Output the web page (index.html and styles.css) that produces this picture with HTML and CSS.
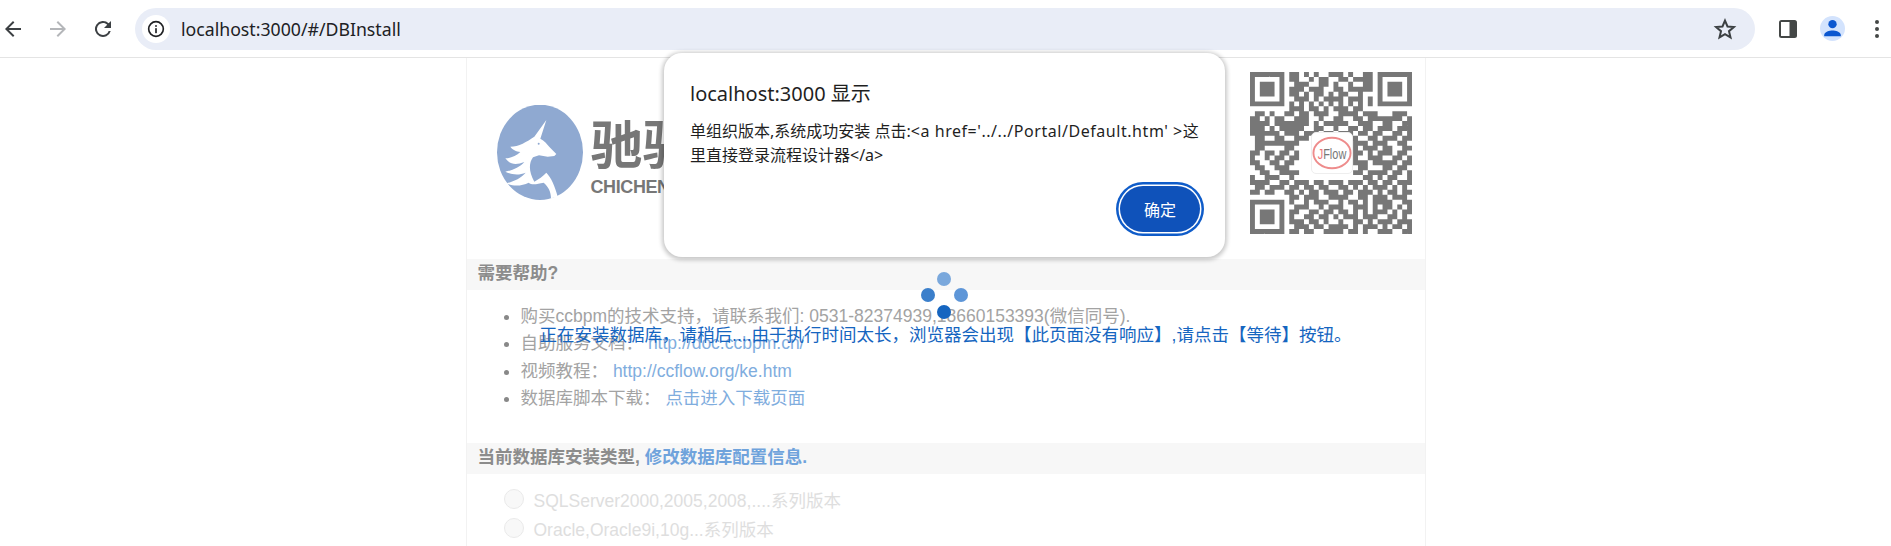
FILE: index.html
```html
<!DOCTYPE html>
<html lang="en">
<head>
    <meta charset="UTF-8">
    <title>DBInstall</title>
    <link rel="stylesheet" href="styles.css">
</head>
<body>
    <div class="toolbar">
        <svg class="nav-icon" viewBox="0 0 24 24"><path d="M20 11H7.800l5.600-5.600L12 4l-8 8 8 8 1.400-1.400L7.800 13H20z" fill="#3c4043"/></svg>
        <svg class="nav-icon" viewBox="0 0 24 24"><path d="M4 11h12.200l-5.600-5.600L12 4l8 8-8 8-1.400-1.400 5.600-5.600H4z" fill="#b4b6b9"/></svg>
        <svg class="nav-icon" viewBox="0 0 24 24"><path d="M17.650 6.350A8 8 0 1 0 19.730 14h-2.080A6 6 0 1 1 12 6c1.660 0 3.140.690 4.220 1.780L13 11h7V4z" fill="#3c4043"/></svg>
        <div class="omnibox">
            <span class="info-chip">
                <svg viewBox="0 0 24 24" width="20" height="20"><circle cx="12" cy="12" r="8.800" fill="none" stroke="#202124" stroke-width="2"/><rect x="11" y="11" width="2" height="6" fill="#202124"/><rect x="11" y="7.400" width="2" height="2" fill="#202124"/></svg>
            </span>
            <span class="url">localhost:3000/#/DBInstall</span>
            <svg class="star" viewBox="0 0 24 24"><path d="M12 3.600l2.500 5.900 6.400.5-4.900 4.200 1.500 6.200L12 17.100l-5.500 3.300L8 14.200 3.100 10l6.400-.5z" fill="none" stroke="#3c4043" stroke-width="2"/></svg>
        </div>
        <svg class="panel-icon" viewBox="0 0 20 20"><rect x="1" y="1" width="18" height="18" rx="2.500" fill="#444746"/><rect x="3" y="3" width="8.500" height="14" fill="#fff"/></svg>
        <span class="avatar">
            <svg viewBox="0 0 24 24" width="25" height="25"><circle cx="12" cy="7.800" r="4" fill="#0b57d0"/><path d="M4 19.500v-1.200c0-2.900 5.300-4.300 8-4.300s8 1.400 8 4.300v1.200z" fill="#0b57d0"/></svg>
        </span>
        <span class="menu-dots"><i></i><i></i><i></i></span>
    </div>

    <div class="page">
        <div class="banner">
            <div class="logo">
                <svg class="logo-mark" viewBox="110 165 258 285">
                    <ellipse cx="239" cy="307" rx="129" ry="143" fill="#8fa9d1"/>
                    <path d="M258 210L240 266C252 272 260 282 268 292L288 312L282 318L262 320L236 316L218 322C205 340 205 365 222 395C235 388 248 378 258 368C272 382 284 408 292 440L272 445C272 425 264 410 250 398C230 402 215 406 205 398C185 408 160 410 138 400C158 395 182 385 196 368C172 378 150 372 135 365C155 362 178 352 192 336C168 345 150 345 135 325C150 325 168 318 180 306C168 305 155 298 150 290C175 290 200 275 222 260Z" fill="#fff"/>
                    <circle cx="235" cy="281" r="3" fill="#8fa9d1"/>
                </svg>
                <div class="logo-words">
                    <div class="logo-cn">驰骋软件</div>
                    <div class="logo-en">CHICHENG</div>
                </div>
            </div>
            <div class="qr">
                <svg id="qr-code" viewBox="0 0 33 33" width="162" height="162"></svg>
                <div class="qr-badge">
                    <svg viewBox="0 0 42 42" width="42" height="42"><ellipse cx="21" cy="21" rx="19.500" ry="16" fill="#fff" stroke="#ee8c8c" stroke-width="2"/><text x="6" y="27" class="qr-text" textLength="30" lengthAdjust="spacingAndGlyphs"><tspan fill="#e77">J</tspan>Flow</text></svg>
                </div>
            </div>
        </div>

        <div class="section-title">需要帮助?</div>
        <ul class="help-list">
            <li>购买ccbpm的技术支持，请联系我们: 0531-82374939,18660153393(微信同号).</li>
            <li>自助服务文档： <a href="#">http://doc.ccbpm.cn/</a></li>
            <li>视频教程： <a href="#">http://ccflow.org/ke.htm</a></li>
            <li>数据库脚本下载： <a href="#">点击进入下载页面</a></li>
        </ul>

        <div class="section-title second">当前数据库安装类型, <a href="#">修改数据库配置信息.</a></div>
        <div class="db-list">
            <label class="db-item"><input type="radio" disabled>SQLServer2000,2005,2008,....系列版本</label>
            <label class="db-item"><input type="radio" disabled>Oracle,Oracle9i,10g...系列版本</label>
        </div>
    </div>

    <div class="spinner"><i class="d1"></i><i class="d2"></i><i class="d3"></i><i class="d4"></i></div>
    <div class="install-msg">正在安装数据库，请稍后....由于执行时间太长，浏览器会出现【此页面没有响应】,请点击【等待】按钮。</div>

    <div class="alert-box">
        <div class="alert-title">localhost:3000 显示</div>
        <div class="alert-msg">单组织版本,系统成功安装 点击:<span class="msg-code">&lt;a href='../../Portal/Default.htm' &gt;</span>这里直接登录流程设计器&lt;/a&gt;</div>
        <div class="alert-actions"><button class="alert-ok">确定</button></div>
    </div>

    <script>
        // qr modules, one string per row
        const rows = [
            '111111101101010011101001101111111',
            '100000101100101100110111101000001',
            '101110100111001101001001101011101',
            '101110101110111001101111101011101',
            '101110101101011010110010001011101',
            '100000100111010111101110101000001',
            '111111101010101010101010101111111',
            '000000001110110101110110000000000',
            '011010011011011100111101110001110',
            '110101100111001001100110111111101',
            '111101111111010111110011100110011',
            '111010111110011001001101101110111',
            '111111011101110110111011011001101',
            '011001100111000000001100110111011',
            '011111111100000000000111011100110',
            '011000011000000000000101110110011',
            '110110110100000000000110101110110',
            '100101101100000000000100111001101',
            '110011011000000000000111011111011',
            '011001110000000000000011000110110',
            '001100111100000000000110111101101',
            '100111001000000000000001101011001',
            '111100110111011011101110110110111',
            '011011101101101100110101011101010',
            '110110011010110111011011101011011',
            '000000001101110011110011011101110',
            '111111101001011100101101011110011',
            '100000100111001011100111010110101',
            '101110101100110110110101011101011',
            '101110101001101101011101110011010',
            '101110101110110100100110101110111',
            '100000100111011011110101110101101',
            '111111101101100111101101001110011'
        ];
        let d = '';
        rows.forEach((row, y) => {
            for (let x = 0; x < row.length; x++) {
                if (row[x] === '1') d += `M${x} ${y}h1v1h-1z`;
            }
        });
        document.getElementById('qr-code').innerHTML = `<path d="${d}" fill="#777"/>`;
    </script>
</body>
</html>
```

FILE: styles.css
```css
html, body {
    margin: 0;
    height: 546px;
    overflow: hidden;
    background: #fff;
}
body {
    position: relative;
    font-family: "Liberation Sans", "Noto Sans CJK SC", sans-serif;
    font-size: 17.5px;
    color: #a3a3a3;
}
a {
    color: #7fadde;
    text-decoration: none;
}

.toolbar {
    display: flex;
    align-items: center;
    height: 57px;
    border-bottom: 1px solid #e4e4e4;
    padding-left: 1px;
}
.nav-icon {
    width: 24px;
    height: 24px;
    margin-right: 21px;
    flex: none;
}
.omnibox {
    flex: none;
    display: flex;
    align-items: center;
    width: 1620px;
    height: 42px;
    margin-left: -1px;
    border-radius: 21px;
    background: #e9edf7;
    box-sizing: border-box;
    padding: 0 18px 0 7px;
}
.info-chip {
    display: flex;
    align-items: center;
    justify-content: center;
    width: 28px;
    height: 28px;
    border-radius: 50%;
    background: #fff;
}
.url {
    margin-left: 11px;
    font-family: "Noto Sans", sans-serif;
    font-size: 17.7px;
    color: #202124;
}
.star {
    width: 24px;
    height: 24px;
    margin-left: auto;
}
.panel-icon {
    width: 20px;
    height: 20px;
    margin-left: 23px;
}
.avatar {
    display: flex;
    align-items: center;
    justify-content: center;
    width: 25px;
    height: 25px;
    margin-left: 22px;
    border-radius: 50%;
    background: #d3e3fd;
}
.menu-dots {
    display: flex;
    flex-direction: column;
    gap: 3px;
    margin-left: 30px;
}
.menu-dots i {
    width: 4px;
    height: 4px;
    border-radius: 50%;
    background: #444746;
}

.page {
    width: 958px;
    height: 488px;
    margin: 0 auto;
    border-left: 1px solid #f2f2f2;
    border-right: 1px solid #f2f2f2;
}
.banner {
    display: flex;
    justify-content: space-between;
    height: 201px;
    box-sizing: border-box;
    padding: 14px 13px 0 30px;
}
.logo {
    display: flex;
    align-items: flex-start;
    gap: 8px;
    padding-top: 33px;
}
.logo-mark {
    width: 86px;
    height: 95px;
}
.logo-words {
    padding-top: 11px;
}
.logo-cn {
    font-size: 52px;
    font-weight: 700;
    line-height: 60px;
    color: #777;
    white-space: nowrap;
}
.logo-en {
    font-size: 18px;
    font-weight: 700;
    line-height: 22px;
    letter-spacing: -0.4px;
    color: #777;
}
.qr {
    position: relative;
    width: 162px;
    height: 162px;
}
#qr-code {
    filter: blur(0.4px);
}
.qr-badge {
    position: absolute;
    left: 61px;
    top: 60px;
    display: flex;
    align-items: center;
    justify-content: center;
    width: 40px;
    height: 40px;
    border: 1px solid #eee;
    border-radius: 5px;
    background: #fff;
}
.qr-text {
    font-size: 15px;
    fill: #777;
}

.section-title {
    height: 31px;
    line-height: 28px;
    padding-left: 11px;
    background: #f7f7f7;
    font-weight: 700;
    color: #8c8c8c;
}
.section-title a {
    color: #6fa3dc;
}
.section-title.second {
    margin-top: 30px;
}
.help-list {
    margin: 0;
    padding: 13px 0 0 54px;
    list-style: disc;
}
.help-list li {
    height: 27.400px;
    line-height: 27.400px;
}
.help-list li::marker {
    color: #888;
}
.db-list {
    padding: 11px 0 0 37px;
}
.db-item {
    display: flex;
    align-items: center;
    gap: 10px;
    height: 29px;
    color: #dedede;
}
.db-item input {
    appearance: none;
    width: 20px;
    height: 20px;
    margin: 0;
    border: 1px solid #eaeaea;
    border-radius: 50%;
    background: #f8f8f8;
}

/* things lying over the page */
.spinner i {
    position: absolute;
    width: 14px;
    height: 14px;
    border-radius: 50%;
}
.d1 { left: 937px; top: 272px; background: #7aa8dc; }
.d2 { left: 954px; top: 288px; background: #5e96d8; }
.d3 { left: 921px; top: 288px; background: #3b7fcb; }
.d4 { left: 937px; top: 305px; background: #1565c0; }
.install-msg {
    position: absolute;
    left: 0;
    right: 0;
    top: 323px;
    text-align: center;
    line-height: 24px;
    color: #1565c0;
}

.alert-box {
    position: absolute;
    left: 664px;
    top: 53px;
    width: 561px;
    height: 204px;
    box-sizing: border-box;
    padding: 27px 26px 0;
    border-radius: 18px;
    background: #fff;
    box-shadow: 0 1px 4px 2px rgba(0, 0, 0, 0.22);
    font-family: "Noto Sans", "Noto Sans CJK SC", sans-serif;
    color: #1f1f1f;
}
.alert-title {
    font-size: 20px;
    line-height: 28px;
}
.alert-msg {
    margin-top: 11px;
    font-size: 16px;
    line-height: 24px;
}
.msg-code {
    letter-spacing: 0.55px;
}
.alert-actions {
    display: flex;
    justify-content: flex-end;
    margin: 15px -5px 0 0;
}
.alert-ok {
    width: 80px;
    height: 46px;
    margin: 4px;
    border: none;
    border-radius: 23px;
    background: #0f52ba;
    box-shadow: 0 0 0 1.500px #fff, 0 0 0 4px #0f5cc9;
    color: #fff;
    font-family: inherit;
    font-size: 16px;
}
```
